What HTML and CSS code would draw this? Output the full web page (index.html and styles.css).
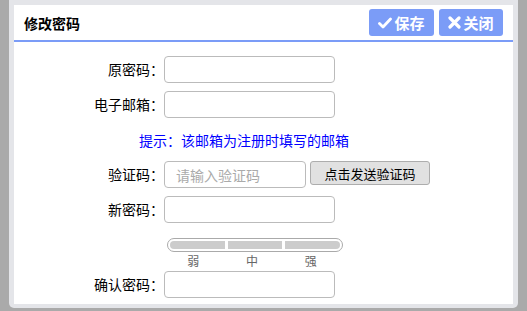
FILE: index.html
```html
<!DOCTYPE html>
<html lang="zh-CN">
<head>
    <meta charset="UTF-8">
    <title>修改密码</title>
    <link rel="stylesheet" href="styles.css">
</head>
<body>
    <div class="dialog">
        <div class="panel">
            <div class="header">
                <span class="title">修改密码</span>
                <div class="tools">
                    <a class="tool_btn save_btn">
                        <svg width="14" height="12" viewBox="0 0 14 12"><path d="M1.5 6.5 L5 10 L12.5 2" fill="none" stroke="#fff" stroke-width="2.8" stroke-linecap="round" stroke-linejoin="round"/></svg>保存
                    </a>
                    <a class="tool_btn close_btn">
                        <svg width="13" height="13" viewBox="0 0 13 13"><path d="M2 2 L11 11 M11 2 L2 11" fill="none" stroke="#fff" stroke-width="3.2" stroke-linecap="round"/></svg>关闭
                    </a>
                </div>
            </div>
            <div class="form">
                <div class="row">
                    <label class="lbl">原密码：</label>
                    <input class="txt" type="password">
                </div>
                <div class="row">
                    <label class="lbl">电子邮箱：</label>
                    <input class="txt" type="text">
                </div>
                <div class="hint">提示：该邮箱为注册时填写的邮箱</div>
                <div class="row">
                    <label class="lbl">验证码：</label>
                    <input class="txt txt_code" type="text" placeholder="请输入验证码">
                    <button class="send_btn">点击发送验证码</button>
                </div>
                <div class="row">
                    <label class="lbl">新密码：</label>
                    <input class="txt" type="password">
                </div>
                <div class="strength">
                    <div class="bar">
                        <span class="seg"></span>
                        <span class="seg"></span>
                        <span class="seg"></span>
                    </div>
                    <div class="levels">
                        <span>弱</span>
                        <span>中</span>
                        <span>强</span>
                    </div>
                </div>
                <div class="row row_last">
                    <label class="lbl">确认密码：</label>
                    <input class="txt" type="password">
                </div>
            </div>
        </div>
    </div>
</body>
</html>
```

FILE: styles.css
```css
html, body {
    margin: 0;
    padding: 0;
}
body {
    background-color: #aaaaaa;
    font-family: "Noto Sans CJK SC", "Liberation Sans", sans-serif;
    font-size: 14px;
    color: #000;
    height: 311px;
    overflow: hidden;
}
.dialog {
    margin-left: 9px;
    width: 499px;
    padding: 5px 5px 4px 5px;
    background-color: #e4e5e9;
    border-radius: 0 0 5px 5px;
}
.panel {
    background-color: #ffffff;
    height: 299px;
}
.header {
    display: flex;
    justify-content: space-between;
    align-items: flex-start;
    height: 35px;
    border-bottom: 2px solid #7b9cf7;
    padding: 0 10px;
}
.title {
    font-weight: bold;
    font-size: 14px;
    line-height: 36px;
}
.tools {
    display: flex;
    gap: 5px;
    margin-top: 4px;
}
.tool_btn {
    display: flex;
    align-items: center;
    justify-content: center;
    gap: 2px;
    height: 27px;
    background-color: #7b9cf7;
    border-radius: 3px;
    color: #fff;
    font-weight: bold;
    font-size: 15px;
}
.save_btn {
    width: 65px;
}
.close_btn {
    width: 64px;
}
.form {
    padding-top: 14px;
}
.row {
    display: flex;
    align-items: flex-start;
    margin-bottom: 8px;
}
.lbl {
    width: 150px;
    text-align: right;
    line-height: 27px;
}
.txt {
    box-sizing: border-box;
    width: 171px;
    height: 27px;
    border: 1px solid #bbbbbb;
    border-radius: 4px;
    padding: 0 11px;
    font-family: inherit;
    font-size: 14px;
    outline: none;
    margin: 0;
}
.txt::placeholder {
    color: #aaaaaa;
}
.txt_code {
    width: 142px;
}
.send_btn {
    box-sizing: border-box;
    margin: 0 0 0 4px;
    width: 120px;
    height: 24px;
    background-color: #e1e1e1;
    border: 1px solid #adadad;
    border-radius: 3px;
    font-family: inherit;
    font-size: 13px;
    color: #000;
    padding: 0;
}
.hint {
    height: 28px;
    line-height: 28px;
    margin-bottom: 7px;
    padding-left: 125px;
    color: #0000ff;
}
.strength {
    margin-left: 150px;
    padding-top: 7px;
    height: 33px;
}
.bar {
    box-sizing: border-box;
    display: flex;
    gap: 3px;
    margin-left: 3px;
    width: 176px;
    height: 14px;
    padding: 2px;
    border: 1px solid #aaaaaa;
    border-radius: 7px;
}
.seg {
    flex: 1;
    background-color: #cccccc;
}
.seg:first-child {
    border-radius: 4px 0 0 4px;
}
.seg:last-child {
    border-radius: 0 4px 4px 0;
}
.levels {
    display: flex;
    width: 176px;
    font-size: 12px;
    color: #666;
    line-height: 17px;
}
.levels span {
    flex: 1;
    text-align: center;
}
```
